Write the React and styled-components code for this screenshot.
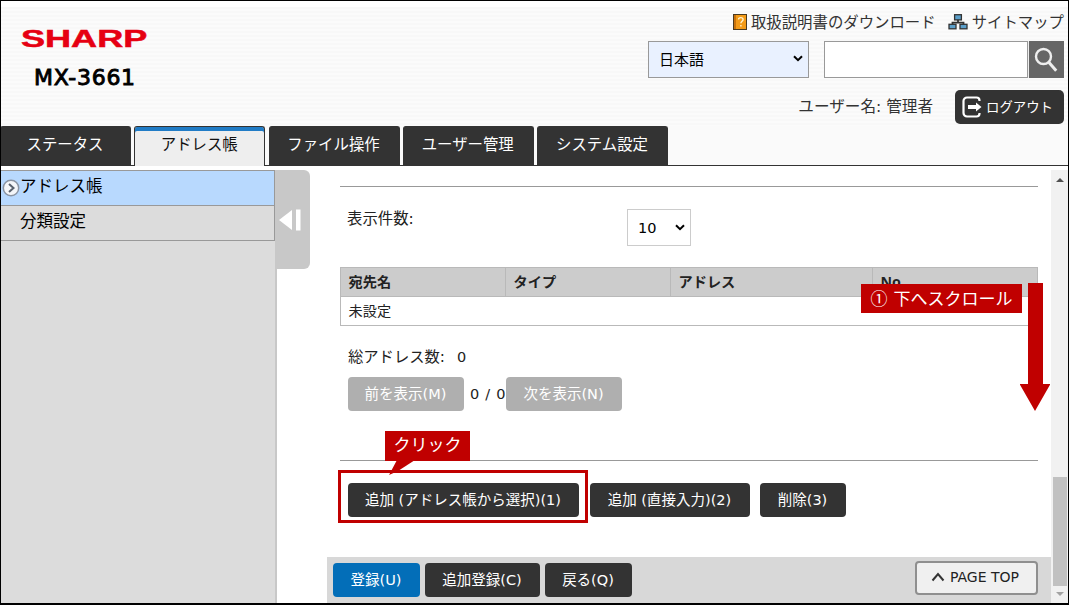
import React from "react";
import styled, { createGlobalStyle } from "styled-components";

const tabs = [
  { label: "ステータス" },
  { label: "アドレス帳", active: true },
  { label: "ファイル操作" },
  { label: "ユーザー管理" },
  { label: "システム設定" },
];

const columns = ["宛先名", "タイプ", "アドレス", "No."];

function ManualIcon() {
  return (
    <svg width="14" height="16" viewBox="0 0 14 16">
      <rect x="0.5" y="0.5" width="13" height="15" fill="#f39a17" stroke="#4a3a22" />
      <rect x="1" y="1" width="2" height="14" fill="#c8720c" />
      <path
        d="M5.5 5.6c0-2.6 4.6-2.6 4.6 0 0 1.8-2.2 1.6-2.2 3.6M7.9 11v1.6"
        fill="none"
        stroke="#fff3d0"
        strokeWidth="1.4"
      />
    </svg>
  );
}

function SitemapIcon() {
  return (
    <svg width="20" height="16" viewBox="0 0 20 16">
      <path d="M10 5v4M4.500 11V8.700h11V11" fill="none" stroke="#333" strokeWidth="1.800" />
      <g fill="#5b9fca" stroke="#333" strokeWidth="1.3">
        <rect x="6.600" y="0.700" width="6.800" height="5.200" />
        <rect x="1" y="10.300" width="7" height="4.500" />
        <rect x="12" y="10.300" width="7" height="4.500" />
      </g>
    </svg>
  );
}

function SearchIcon() {
  return (
    <svg width="24" height="26" viewBox="0 0 24 26">
      <circle cx="9.500" cy="9.500" r="7.500" fill="none" stroke="#eee" strokeWidth="2.400" />
      <path d="M14.600 15l7.600 8.700" stroke="#eee" strokeWidth="3" />
    </svg>
  );
}

function LogoutIcon() {
  return (
    <svg width="20" height="22" viewBox="0 0 20 22">
      <path
        d="M17.500 5V4.500a3 3 0 0 0-3-3H5a3.500 3.500 0 0 0-3.500 3.500v12A3.500 3.500 0 0 0 5 20.500h9.500a3 3 0 0 0 3-3V17"
        fill="none"
        stroke="#fff"
        strokeWidth="2.200"
      />
      <path d="M6 9h8V6.500l5.500 4.500-5.500 4.500V13H6z" fill="#fff" />
    </svg>
  );
}

function Chevron() {
  return (
    <svg width="10" height="7" viewBox="0 0 10 7">
      <path d="M1 1.200l4 4 4-4" fill="none" stroke="#000" strokeWidth="2" />
    </svg>
  );
}

function App() {
  return (
    <Window>
      <GlobalStyle />
      <Header>
        <Brand>
          <Logo width="127" height="19" viewBox="0 0 127 19">
            <text
              x="0"
              y="17.7"
              textLength="85.3"
              lengthAdjust="spacingAndGlyphs"
              transform="scale(1.48 1)"
            >
              SHARP
            </text>
          </Logo>
          <Model>MX-3661</Model>
        </Brand>
        <Tools>
          <Links>
            <ManualIcon />
            <LinkText $gap="12px">取扱説明書のダウンロード</LinkText>
            <SitemapIcon />
            <LinkText>サイトマップ</LinkText>
          </Links>
          <SearchRow>
            <Language>
              日本語
              <Chevron />
            </Language>
            <SearchBox />
            <SearchButton>
              <SearchIcon />
            </SearchButton>
          </SearchRow>
          <UserRow>
            <UserName>ユーザー名: 管理者</UserName>
            <Logout>
              <LogoutIcon />
              <span>ログアウト</span>
            </Logout>
          </UserRow>
        </Tools>
      </Header>
      <Tabs>
        {tabs.map((tab) => (
          <Tab key={tab.label} $active={tab.active}>
            {tab.label}
          </Tab>
        ))}
      </Tabs>
      <Body>
        <Sidebar>
          <MenuItem $active>
            <CurrentIcon width="18" height="18" viewBox="0 0 18 18">
              <circle cx="9" cy="9" r="7.700" fill="#f4f6f9" stroke="#8a94a3" strokeWidth="1.500" />
              <path d="M7 5l4.500 4L7 13" fill="none" stroke="#5a626e" strokeWidth="2" />
            </CurrentIcon>
            アドレス帳
          </MenuItem>
          <MenuItem>分類設定</MenuItem>
        </Sidebar>
        <Divider>
          <Handle>
            <svg width="22" height="22" viewBox="0 0 22 22">
              <path d="M0 11L13 1v20z" fill="#fff" />
              <rect x="17" y="0.500" width="4.500" height="21" fill="#fff" />
            </svg>
          </Handle>
        </Divider>
        <Main>
          <Panel>
            <CountRow>
              <span>表示件数:</span>
              <CountSelect>
                10
                <Chevron />
              </CountSelect>
            </CountRow>
            <Table>
              <TableHead>
                {columns.map((column) => (
                  <HeadCell key={column}>{column}</HeadCell>
                ))}
              </TableHead>
              <EmptyRow>未設定</EmptyRow>
            </Table>
            <Total>
              総アドレス数:<b>0</b>
            </Total>
            <Pager>
              <Button $width="116px" $disabled>
                前を表示(M)
              </Button>
              <PageCount>0 / 0</PageCount>
              <Button $width="116px" $disabled>
                次を表示(N)
              </Button>
            </Pager>
            <Actions>
              <Button $width="231px">追加 (アドレス帳から選択)(1)</Button>
              <Button $width="160px" $left="11px">
                追加 (直接入力)(2)
              </Button>
              <Button $width="86px" $left="10px">
                削除(3)
              </Button>
            </Actions>
          </Panel>
          <Footer>
            <Button $width="87px" $primary>
              登録(U)
            </Button>
            <Button $width="115px" $left="5px">
              追加登録(C)
            </Button>
            <Button $width="87px" $left="5px">
              戻る(Q)
            </Button>
            <PageTop>
              <svg width="14" height="10" viewBox="0 0 14 10">
                <path d="M1.500 8.500L7 2l5.500 6.500" fill="none" stroke="#333" strokeWidth="2" />
              </svg>
              PAGE TOP
            </PageTop>
          </Footer>
        </Main>
        <Scrollbar>
          <ScrollArrow $up />
          <Thumb />
          <ScrollArrow />
        </Scrollbar>
      </Body>
      <ScrollNote>① 下へスクロール</ScrollNote>
      <ScrollPointer width="30" height="128" viewBox="0 0 30 128">
        <path d="M8 0h15v101h7.500L15 128 -0.500 101H8z" fill="#c00000" />
      </ScrollPointer>
      <ClickFrame />
      <ClickNote>クリック</ClickNote>
      <ClickTail width="30" height="16" viewBox="0 0 30 16">
        <path d="M8 0h18L9 11 0 15z" fill="#c00000" />
      </ClickTail>
    </Window>
  );
}

export default App;

const GlobalStyle = createGlobalStyle`
  * {
    box-sizing: border-box;
  }
  body {
    margin: 0;
    font-family: "DejaVu Sans", "Noto Sans CJK JP", sans-serif;
    font-size: 15px;
    color: #222;
  }
  svg {
    display: block;
    flex: none;
  }
`;

const Window = styled.div`
  position: relative;
  display: flex;
  flex-direction: column;
  width: 1069px;
  height: 605px;
  border: 1px solid #000;
  border-bottom-width: 2px;
  background: white;
  overflow: hidden;
  white-space: nowrap;
`;

const Header = styled.div`
  display: flex;
  justify-content: space-between;
  height: 125px;
  border-top: 6px solid white;
  background: repeating-linear-gradient(#f8f8f8 0 2px, #fbfbfb 2px 4px);
`;

const Brand = styled.div`
  padding: 22px 0 0 20px;
`;

const Logo = styled.svg`
  overflow: visible;
  font-family: "Liberation Sans", sans-serif;
  font-size: 24px;
  font-weight: 700;
  fill: #e60012;
  stroke: #e60012;
  stroke-width: 0.5px;
`;

const Model = styled.div`
  margin: 16px 0 0 12px;
  padding-left: 1px;
  font-size: 22px;
  line-height: 28px;
  letter-spacing: 0.7px;
  color: black;
  -webkit-text-stroke: 0.9px black;
`;

const Tools = styled.div`
  display: flex;
  flex-direction: column;
  align-items: flex-end;
  padding-right: 4px;
`;

const Links = styled.div`
  display: flex;
  align-items: center;
  height: 30px;
  color: #333;
`;

const LinkText = styled.span`
  margin-left: 4px;
  margin-right: ${({ $gap }) => $gap || "0"};
  padding-top: 1px;
  font-size: 15.4px;
  line-height: 20px;
`;

const SearchRow = styled.div`
  display: flex;
  margin-top: 4px;
  height: 37px;
`;

const Language = styled.div`
  display: flex;
  align-items: center;
  justify-content: space-between;
  width: 161px;
  margin-right: 15px;
  padding: 0 5px 3px 10px;
  border: 1px solid #999;
  background: #e9f1ff;
  color: black;
`;

const SearchBox = styled.div`
  width: 204px;
  border: 1px solid #999;
  background: white;
`;

const SearchButton = styled.div`
  display: flex;
  align-items: center;
  justify-content: center;
  width: 36px;
  padding-right: 2px;
  border-left: 1px solid #eee;
  background: #666;
`;

const UserRow = styled.div`
  display: flex;
  align-items: center;
  margin-top: 12px;
  height: 34px;
  color: #333;
`;

const UserName = styled.span`
  padding-bottom: 5px;
  font-size: 15.6px;
`;

const Logout = styled.div`
  display: flex;
  align-items: center;
  gap: 4px;
  width: 109px;
  height: 34px;
  margin-left: 22px;
  padding-left: 7px;
  border-radius: 5px;
  background: #333;
  color: white;
  font-size: 13.4px;
  span {
    padding-bottom: 3px;
  }
`;

const Tabs = styled.div`
  display: flex;
  gap: 3.25px;
  height: 40px;
  margin-left: -1px;
  border-bottom: 1px solid #333;
  background: #fafafa;
`;

const Tab = styled.div`
  width: 131px;
  height: ${({ $active }) => ($active ? "40px" : "39px")};
  padding-right: 1px;
  border: 1px solid #333;
  border-bottom: none;
  border-radius: 3px 3px 0 0;
  background: ${({ $active }) => ($active ? "#eee" : "#333")};
  box-shadow: ${({ $active }) => ($active ? "inset 0 4px #217cc6" : "none")};
  color: ${({ $active }) => ($active ? "#111" : "white")};
  font-size: 15.4px;
  line-height: 36px;
  text-align: center;
`;

const Body = styled.div`
  display: flex;
  flex: 1;
  padding-top: 4px;
  min-height: 0;
`;

const Sidebar = styled.div`
  width: 274px;
  border-top: 1px solid #999;
  background: #dcdcdc;
`;

const MenuItem = styled.div`
  display: flex;
  align-items: center;
  height: 35px;
  padding: 0 0 2px ${({ $active }) => ($active ? "1px" : "19px")};
  border-right: 1px solid #999;
  border-bottom: 1px solid #999;
  background: ${({ $active }) => ($active ? "#b8d9fe" : "#dcdcdc")};
  font-size: 16.5px;
  line-height: 30px;
  color: black;
`;

const CurrentIcon = styled.svg`
  margin-top: 1px;
`;

const Divider = styled.div`
  width: 35px;
  background: linear-gradient(to right, #c8c8c8 2px, white 2px);
`;

const Handle = styled.div`
  display: flex;
  align-items: center;
  height: 99px;
  padding-left: 4px;
  border-radius: 0 6px 6px 0;
  background: #c8c8c8;
`;

const Main = styled.div`
  display: flex;
  flex-direction: column;
  flex: 1;
  padding-left: 17px;
`;

const Panel = styled.div`
  flex: 1;
  margin: 16px 13px 0;
  border-top: 1px solid #999;
`;

const CountRow = styled.div`
  display: flex;
  justify-content: space-between;
  height: 80px;
  padding: 20px 347px 0 7px;
  font-size: 15.4px;
  line-height: 24px;
`;

const CountSelect = styled.div`
  display: flex;
  align-items: center;
  justify-content: space-between;
  width: 64px;
  height: 37px;
  margin-top: 2px;
  padding: 0 5px 0 10px;
  border: 1px solid #ccc;
  font-size: 14.5px;
  color: black;
`;

const Table = styled.div`
  height: 59px;
  border: 1px solid #b9b9b9;
  font-family: "Noto Sans", "Noto Sans CJK JP", sans-serif;
  font-size: 14.2px;
`;

const TableHead = styled.div`
  display: grid;
  grid-template-columns: 164px 165px 202px 1fr;
  height: 29px;
  background: #ccc;
  border-bottom: 1px solid #b9b9b9;
`;

const HeadCell = styled.div`
  padding-left: 7.5px;
  line-height: 27px;
  font-weight: 700;
  & + & {
    border-left: 1px solid #b9b9b9;
  }
`;

const EmptyRow = styled.div`
  padding-left: 7.5px;
  line-height: 27px;
`;

const Total = styled.div`
  margin-top: 18px;
  padding-left: 8px;
  font-size: 15.3px;
  line-height: 26px;
  b {
    margin-left: 12px;
    font-size: 14.5px;
    font-weight: 400;
  }
`;

const Pager = styled.div`
  display: flex;
  align-items: center;
  height: 34px;
  margin-top: 7px;
  padding-left: 8px;
`;

const PageCount = styled.span`
  width: 42px;
  padding-left: 6px;
  font-size: 14.5px;
  letter-spacing: 0.7px;
`;

const Actions = styled.div`
  display: flex;
  margin-top: 49px;
  padding: 22px 0 0 8px;
  border-top: 1px solid #999;
`;

const Button = styled.div`
  width: ${({ $width }) => $width};
  height: 34px;
  margin-left: ${({ $left }) => $left || "0"};
  padding-right: 1px;
  border-radius: 4px;
  background: ${({ $primary, $disabled }) =>
    $primary ? "#036eb8" : $disabled ? "#afafaf" : "#333"};
  color: white;
  font-size: 14.5px;
  line-height: 34px;
  text-align: center;
`;

const Footer = styled.div`
  display: flex;
  height: 46px;
  padding: 6px 13px 0 6px;
  background: #d8d8d8;
`;

const PageTop = styled.div`
  display: flex;
  align-items: center;
  justify-content: center;
  gap: 5px;
  width: 123px;
  height: 34px;
  margin: -2px 0 0 auto;
  padding: 0 3px 2px 0;
  border: 2px solid #8f8f8f;
  border-radius: 4px;
  background: #f0f0f0;
  font-size: 14px;
`;

const Scrollbar = styled.div`
  display: flex;
  flex-direction: column;
  align-items: center;
  width: 17px;
  background: #f1f1f1;
`;

const ScrollArrow = styled.div`
  height: 4px;
  margin: ${({ $up }) => ($up ? "8px 0 auto" : "6px 0 7px")};
  border: solid transparent;
  border-width: ${({ $up }) => ($up ? "0 4px 4px" : "4px 4px 0")};
  border-bottom-color: #505050;
  border-top-color: #a3a3a3;
`;

const Thumb = styled.div`
  width: 14px;
  height: 109px;
  background: #c1c1c1;
`;

const ScrollNote = styled.div`
  position: absolute;
  left: 860px;
  top: 283px;
  width: 161px;
  height: 29px;
  background: #c00000;
  color: white;
  font-family: "Noto Sans CJK JP", sans-serif;
  font-size: 17px;
  line-height: 28px;
  text-align: center;
  word-spacing: 2px;
`;

const ScrollPointer = styled.svg`
  position: absolute;
  left: 1019px;
  top: 282px;
`;

const ClickFrame = styled.div`
  position: absolute;
  left: 337px;
  top: 469px;
  width: 250px;
  height: 53px;
  border: 3px solid #c00000;
`;

const ClickNote = styled.div`
  position: absolute;
  left: 384px;
  top: 430px;
  width: 85px;
  height: 30px;
  background: #c00000;
  color: white;
  font-size: 17px;
  line-height: 28px;
  text-align: center;
`;

const ClickTail = styled.svg`
  position: absolute;
  left: 388px;
  top: 459px;
`;
